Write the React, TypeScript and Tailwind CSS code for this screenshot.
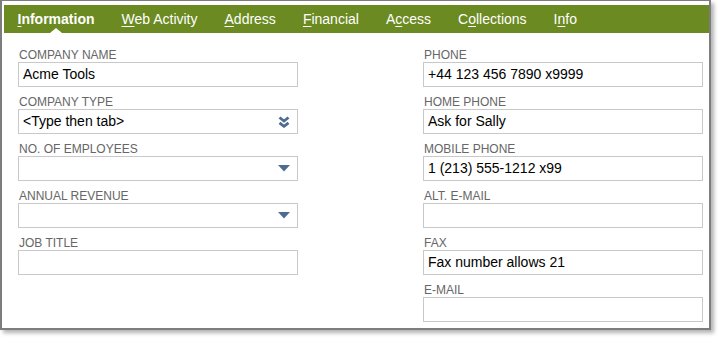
const tabs: { pre: string; key: string; post: string; active?: boolean }[] = [
  { pre: "", key: "I", post: "nformation", active: true },
  { pre: "", key: "W", post: "eb Activity" },
  { pre: "", key: "A", post: "ddress" },
  { pre: "", key: "F", post: "inancial" },
  { pre: "A", key: "c", post: "cess" },
  { pre: "C", key: "o", post: "llections" },
  { pre: "I", key: "n", post: "fo" },
];

type Field = { label: string; value?: string; icon?: "double" | "caret" };

const left: Field[] = [
  { label: "COMPANY NAME", value: "Acme Tools" },
  { label: "COMPANY TYPE", value: "<Type then tab>", icon: "double" },
  { label: "NO. OF EMPLOYEES", icon: "caret" },
  { label: "ANNUAL REVENUE", icon: "caret" },
  { label: "JOB TITLE" },
];

const right: Field[] = [
  { label: "PHONE", value: "+44 123 456 7890 x9999" },
  { label: "HOME PHONE", value: "Ask for Sally" },
  { label: "MOBILE PHONE", value: "1 (213) 555-1212 x99" },
  { label: "ALT. E-MAIL" },
  { label: "FAX", value: "Fax number allows 21" },
  { label: "E-MAIL" },
];

function DoubleChevron() {
  return (
    <svg width="12" height="12" viewBox="0 0 12 12" className="text-[#4e6b91]">
      <path d="M1.5 1.5 L6 5 L10.5 1.5" fill="none" stroke="currentColor" strokeWidth="2.8" />
      <path d="M1.5 6.8 L6 10.3 L10.5 6.8" fill="none" stroke="currentColor" strokeWidth="2.8" />
    </svg>
  );
}

function Caret() {
  return (
    <svg width="12" height="7" viewBox="0 0 12 7" className="text-[#4e6b91]">
      <path d="M0 0 H12 L6 6.5 Z" fill="currentColor" />
    </svg>
  );
}

function FieldBox({ f }: { f: Field }) {
  return (
    <div className="flex flex-col">
      <div className="h-[14px] text-[12px] leading-[14px] text-[#666] pl-[1px]">{f.label}</div>
      <div className="h-[25px] border border-[#c9c9c9] flex items-center pl-[4px] pr-[7px] text-[14px] text-black">
        <span className="flex-1">{f.value}</span>
        {f.icon === "double" && <DoubleChevron />}
        {f.icon === "caret" && <Caret />}
      </div>
    </div>
  );
}

export default function App() {
  return (
    <div className="w-[720px] h-[339px] bg-white" style={{ fontFamily: '"Liberation Sans", Arial, sans-serif' }}>
      <div className="w-[711px] h-[330px] border-l-2 border-t border-r-2 border-b-2 border-[#7d7d7d] bg-white pl-[2px] pt-[4px] shadow-[3px_3px_4px_rgba(0,0,0,0.3)]">
        <div className="h-[28px] bg-[#6b8a21] flex items-center">
          {tabs.map((t, i) => (
            <div
              key={i}
              className={`relative h-full flex items-center px-[13.5px] text-[14px] text-white ${t.active ? "font-bold" : ""}`}
            >
              <span>
                {t.pre}
                <span className="underline underline-offset-2">{t.key}</span>
                {t.post}
              </span>
              {t.active && (
                <span className="absolute bottom-0 left-1/2 -translate-x-1/2 w-0 h-0 border-l-[6px] border-r-[6px] border-b-[5px] border-l-transparent border-r-transparent border-b-white" />
              )}
            </div>
          ))}
        </div>
        <div className="flex pl-[14px] pt-[15px] gap-[125px]">
          <div className="w-[280px] flex flex-col gap-[8px]">
            {left.map((f) => (
              <FieldBox key={f.label} f={f} />
            ))}
          </div>
          <div className="w-[280px] flex flex-col gap-[8px]">
            {right.map((f) => (
              <FieldBox key={f.label} f={f} />
            ))}
          </div>
        </div>
      </div>
    </div>
  );
}
